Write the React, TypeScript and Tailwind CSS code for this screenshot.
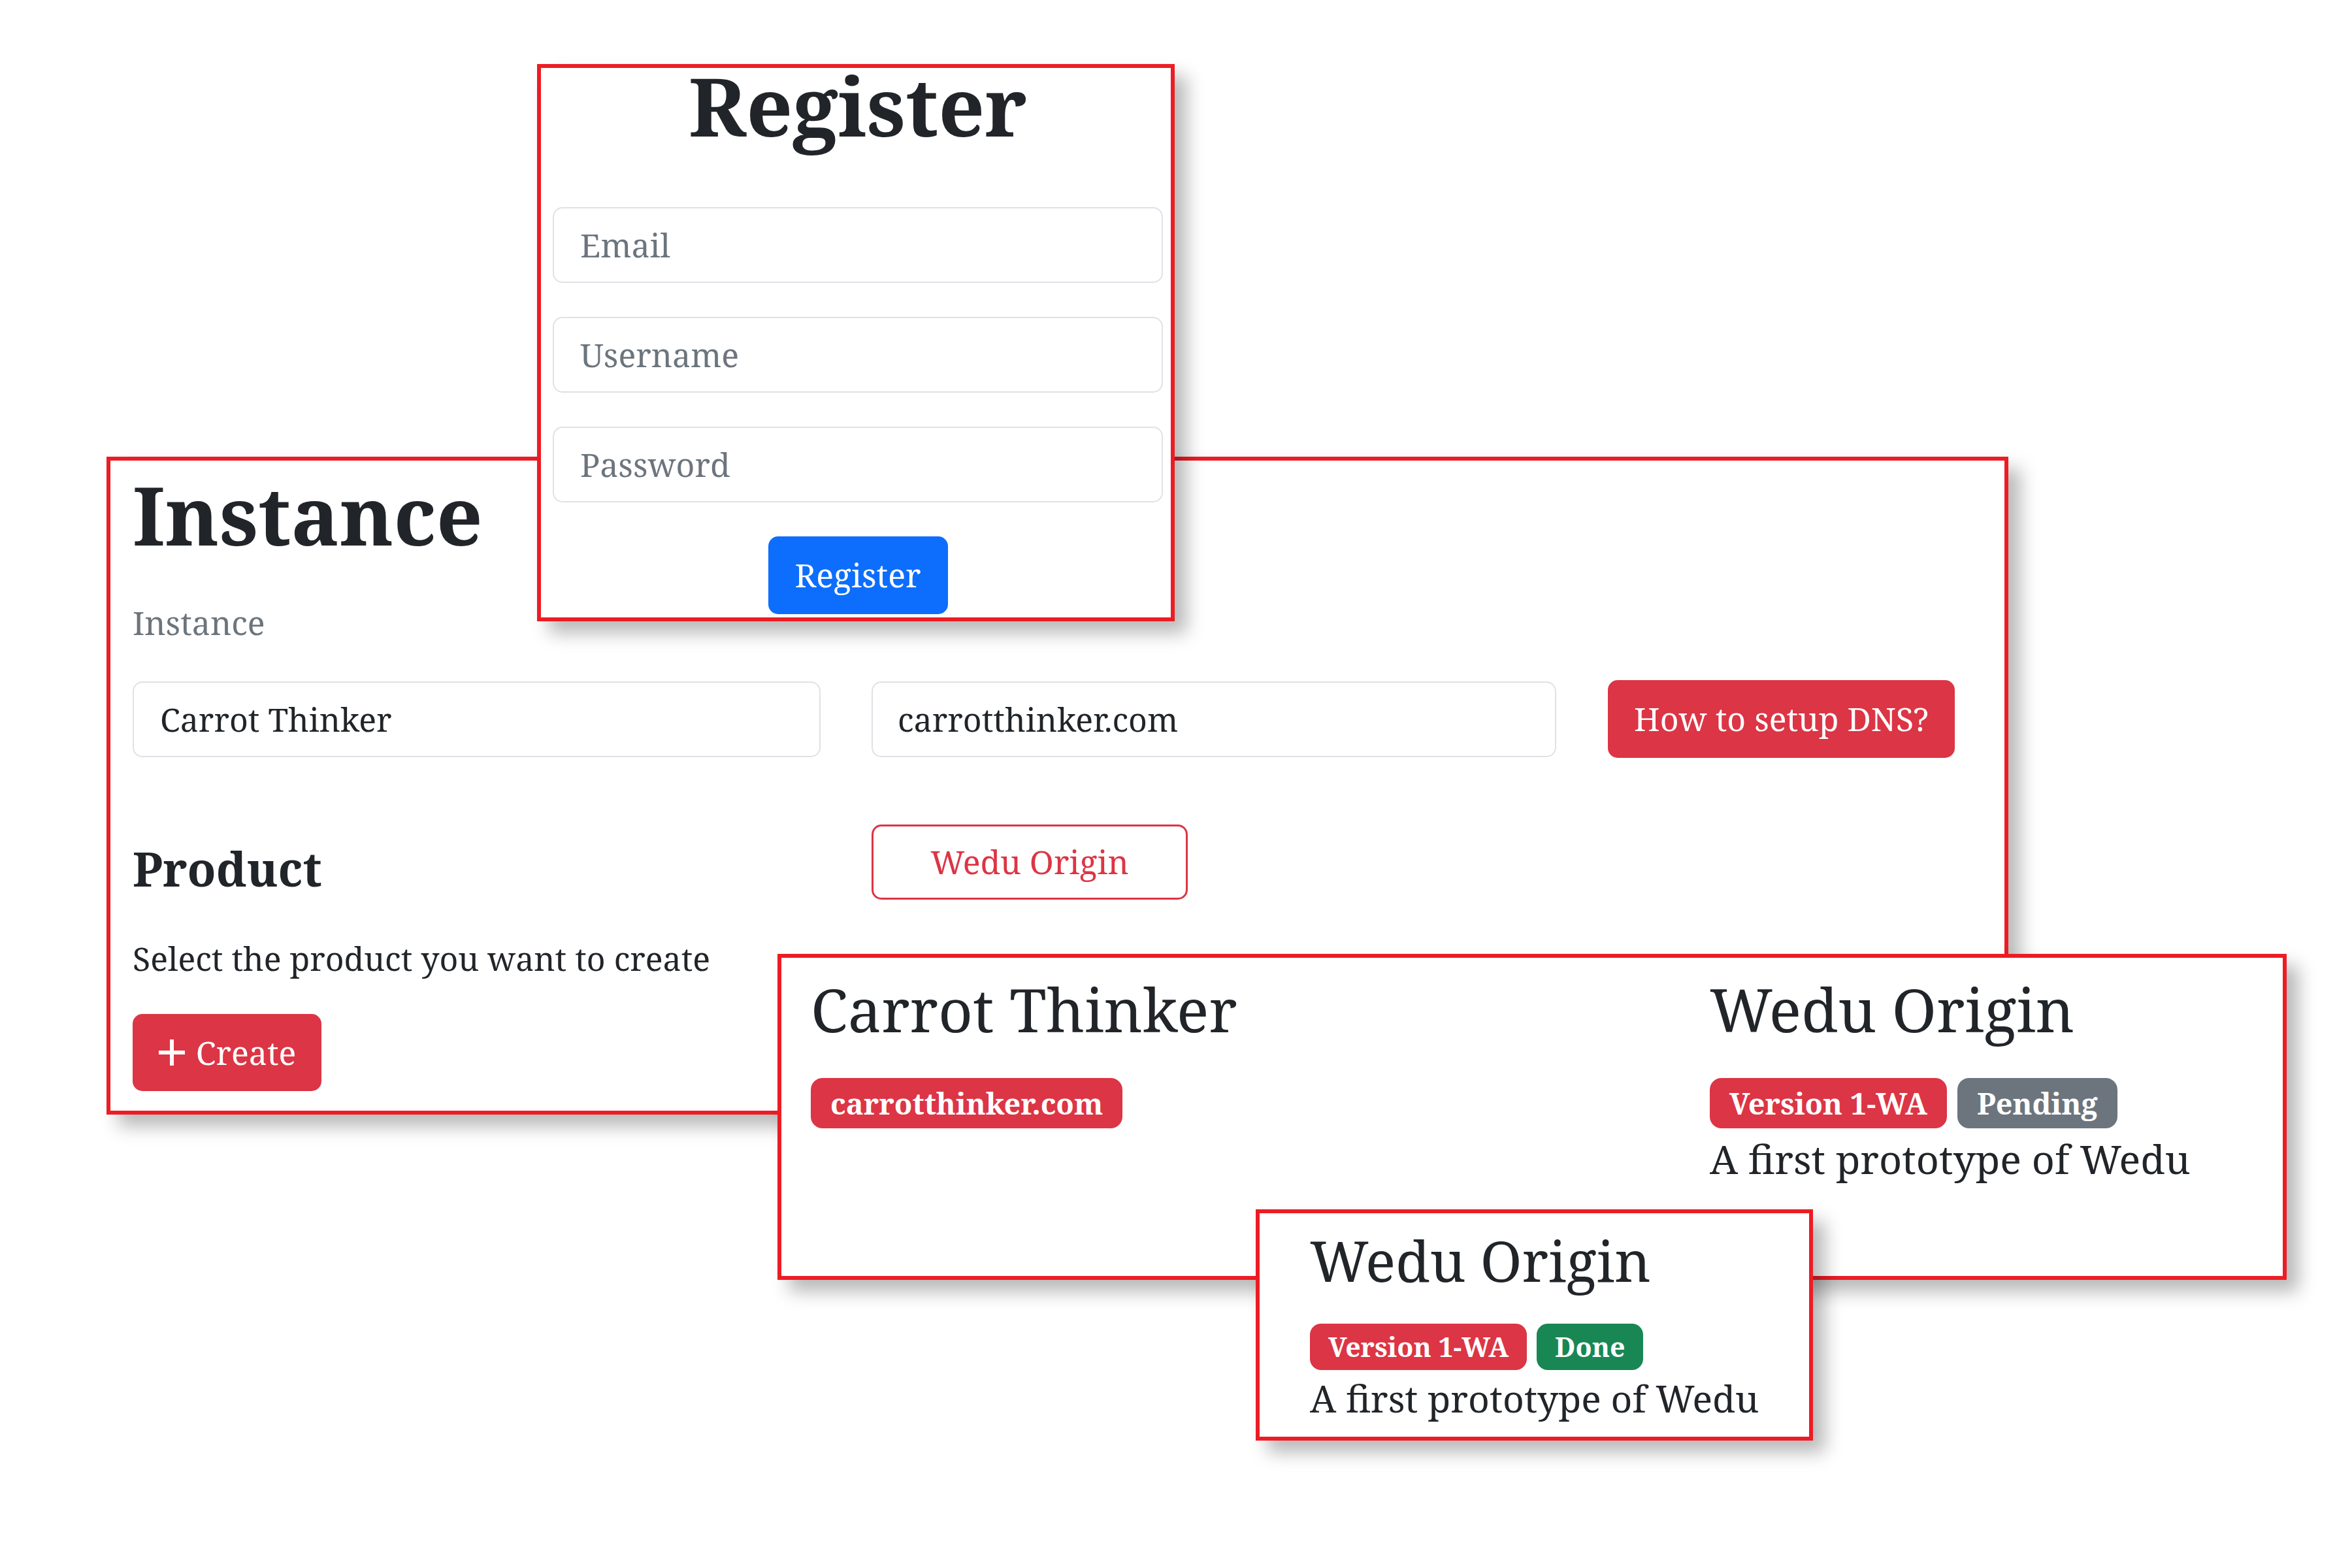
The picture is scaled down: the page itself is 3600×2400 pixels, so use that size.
const font = "font-['Noto_Serif','DejaVu_Serif',serif]";

const Badge = ({ label, tone, small }: { label: string; tone: string; small?: boolean }) => (
  <span
    className={`${tone} inline-flex items-center font-bold leading-none text-white ${
      small ? "h-[71px] rounded-[17px] px-[28px] text-[41px]" : "h-[77px] rounded-[18px] px-[30px] text-[45px]"
    }`}
  >
    {label}
  </span>
);

const PlusIcon = () => (
  <svg width="42" height="42" viewBox="0 0 42 42" fill="none" stroke="currentColor" strokeWidth="6">
    <line x1="21" y1="1" x2="21" y2="41" />
    <line x1="1" y1="21" x2="41" y2="21" />
  </svg>
);

export default function App() {
  return (
    <div className={`${font} relative h-[2400px] w-[3600px] overflow-hidden bg-white text-[#212529]`}>
      {/* Instance window */}
      <div className="absolute left-[163px] top-[699px] h-[1007px] w-[2911px] border-[6px] border-[#ed1c24] bg-white pl-[34px] pt-[22px] shadow-[18px_18px_26px_rgba(0,0,0,0.28)]">
        <h1 className="text-[124px] font-bold leading-[120px]">Instance</h1>
        <p className="mt-[77px] text-[50px] leading-[58px] text-[#6c757d]">Instance</p>
        <div className="mt-[59px] flex items-center gap-[78px]">
          <input
            readOnly
            value="Carrot Thinker"
            className="h-[116px] w-[1053px] rounded-[15px] border-2 border-[#dee2e6] bg-white px-[40px] text-[50px] text-[#212529] outline-none"
          />
          <div className="flex items-center gap-[79px]">
            <input
              readOnly
              value="carrotthinker.com"
              className="h-[116px] w-[1048px] rounded-[15px] border-2 border-[#dee2e6] bg-white px-[38px] text-[50px] text-[#212529] outline-none"
            />
            <button className="h-[119px] w-[531px] rounded-[15px] bg-[#dc3545] text-[50px] text-white">
              How to setup DNS?
            </button>
          </div>
        </div>
        <div className="mt-[102px] flex">
          <div className="w-[1131px] pt-[24px]">
            <h4 className="text-[72px] font-bold leading-[86px]">Product</h4>
            <p className="mt-[66px] text-[50px] leading-[58px]">Select the product you want to create</p>
            <button className="mt-[56px] flex h-[118px] w-[289px] items-center justify-center gap-[16px] rounded-[15px] bg-[#dc3545] text-[50px] text-white">
              <PlusIcon />
              Create
            </button>
          </div>
          <div>
            <button className="h-[115px] w-[484px] rounded-[15px] border-[3px] border-[#dc3545] bg-white text-[50px] text-[#dc3545]">
              Wedu Origin
            </button>
          </div>
        </div>
      </div>

      {/* Register window */}
      <div className="absolute left-[822px] top-[98px] h-[853px] w-[976px] border-[6px] border-[#ed1c24] bg-white pl-[18px] pr-[12px] shadow-[18px_18px_26px_rgba(0,0,0,0.28)]">
        <h1 className="-mt-[3px] text-center text-[124px] font-bold leading-[120px]">Register</h1>
        <div className="mt-[96px] flex flex-col gap-[52px]">
          {["Email", "Username", "Password"].map((p) => (
            <input
              key={p}
              placeholder={p}
              type={p === "Password" ? "password" : "text"}
              className="h-[116px] w-full rounded-[15px] border-2 border-[#dee2e6] bg-white px-[40px] text-[50px] outline-none placeholder:text-[#6c757d]"
            />
          ))}
          <div className="flex justify-center">
            <button className="h-[119px] w-[275px] rounded-[15px] bg-[#0d6efd] text-[50px] text-white">Register</button>
          </div>
        </div>
      </div>

      {/* Instance preview window */}
      <div className="absolute left-[1190px] top-[1460px] flex h-[499px] w-[2310px] border-[6px] border-[#ed1c24] bg-white pl-[45px] pt-[24px] shadow-[18px_18px_26px_rgba(0,0,0,0.28)]">
        <div className="w-[1376px]">
          <h2 className="text-[92px] leading-[110px]">Carrot Thinker</h2>
          <div className="mt-[50px] flex">
            <Badge label="carrotthinker.com" tone="bg-[#dc3545]" />
          </div>
        </div>
        <div>
          <h2 className="text-[92px] leading-[110px]">Wedu Origin</h2>
          <div className="mt-[50px] flex gap-[16px]">
            <Badge label="Version 1-WA" tone="bg-[#dc3545]" />
            <Badge label="Pending" tone="bg-[#6c757d]" />
          </div>
          <p className="mt-[11px] text-[61px] leading-[72px]">A first prototype of Wedu</p>
        </div>
      </div>

      {/* Product preview window */}
      <div className="absolute left-[1922px] top-[1851px] h-[354px] w-[853px] border-[6px] border-[#ed1c24] bg-white pl-[77px] pt-[20px] shadow-[18px_18px_26px_rgba(0,0,0,0.28)]">
        <h2 className="text-[86px] leading-[103px]">Wedu Origin</h2>
        <div className="mt-[46px] flex gap-[15px]">
          <Badge small label="Version 1-WA" tone="bg-[#dc3545]" />
          <Badge small label="Done" tone="bg-[#198754]" />
        </div>
        <p className="mt-[10px] text-[57px] leading-[67px]">A first prototype of Wedu</p>
      </div>
    </div>
  );
}
